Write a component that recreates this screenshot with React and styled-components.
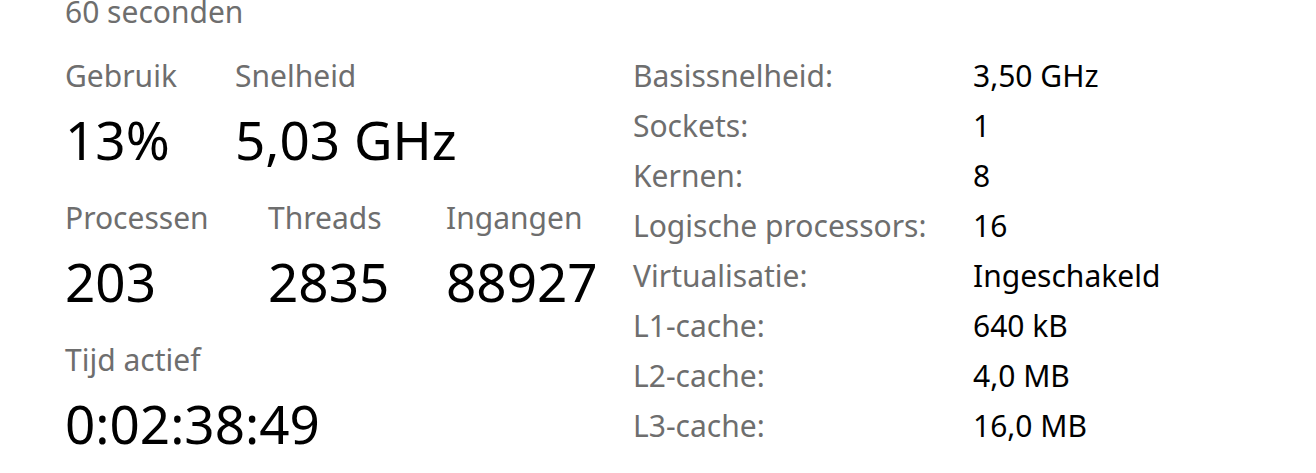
import React from "react";
import styled, { createGlobalStyle } from "styled-components";

const GlobalStyle = createGlobalStyle`
  html, body {
    margin: 0;
    padding: 0;
    background: #ffffff;
    overflow: hidden;
  }
  body {
    font-family: "Noto Sans", "Open Sans", sans-serif;
  }
`;

const Page = styled.div`
  width: 1316px;
  height: 473px;
  padding-left: 65px;
  box-sizing: border-box;
  overflow: hidden;
`;

const Header = styled.div`
  margin-top: -3px;
  height: 30px;
  line-height: 30px;
  font-size: 30px;
  color: #6e6e6e;
`;

const Body = styled.div`
  display: flex;
  margin-top: 31px;
`;

const Left = styled.div`
  width: 568px;
  display: flex;
  flex-direction: column;
  gap: 30px;
`;

const StatRow = styled.div`
  display: flex;
`;

const Stat = styled.div`
  width: ${(p) => (p.$w ? `${p.$w}px` : "auto")};
  display: flex;
  flex-direction: column;
  gap: 16px;
  white-space: nowrap;
`;

const Label = styled.div`
  height: 36px;
  line-height: 36px;
  font-size: 30px;
  color: #6e6e6e;
`;

const Value = styled.div`
  height: 60px;
  line-height: 60px;
  font-size: 53px;
  color: #000000;
`;

const Details = styled.div`
  display: grid;
  grid-template-columns: 340px auto;
  grid-auto-rows: 50px;
  margin-top: -7px;
`;

const DetailLabel = styled.div`
  line-height: 50px;
  font-size: 30px;
  color: #6e6e6e;
  white-space: nowrap;
`;

const DetailValue = styled.div`
  line-height: 50px;
  font-size: 30px;
  color: #000000;
  white-space: nowrap;
`;

const details = [
  ["Basissnelheid:", "3,50 GHz"],
  ["Sockets:", "1"],
  ["Kernen:", "8"],
  ["Logische processors:", "16"],
  ["Virtualisatie:", "Ingeschakeld"],
  ["L1-cache:", "640 kB"],
  ["L2-cache:", "4,0 MB"],
  ["L3-cache:", "16,0 MB"],
];

export default function App() {
  return (
    <Page>
      <GlobalStyle />
      <Header>60 seconden</Header>
      <Body>
        <Left>
          <StatRow>
            <Stat $w={170}>
              <Label>Gebruik</Label>
              <Value>13%</Value>
            </Stat>
            <Stat>
              <Label>Snelheid</Label>
              <Value>5,03 GHz</Value>
            </Stat>
          </StatRow>
          <StatRow>
            <Stat $w={203}>
              <Label>Processen</Label>
              <Value>203</Value>
            </Stat>
            <Stat $w={178}>
              <Label>Threads</Label>
              <Value>2835</Value>
            </Stat>
            <Stat>
              <Label>Ingangen</Label>
              <Value>88927</Value>
            </Stat>
          </StatRow>
          <StatRow>
            <Stat>
              <Label>Tijd actief</Label>
              <Value>0:02:38:49</Value>
            </Stat>
          </StatRow>
        </Left>
        <Details>
          {details.map(([k, v]) => (
            <React.Fragment key={k}>
              <DetailLabel>{k}</DetailLabel>
              <DetailValue>{v}</DetailValue>
            </React.Fragment>
          ))}
        </Details>
      </Body>
    </Page>
  );
}
